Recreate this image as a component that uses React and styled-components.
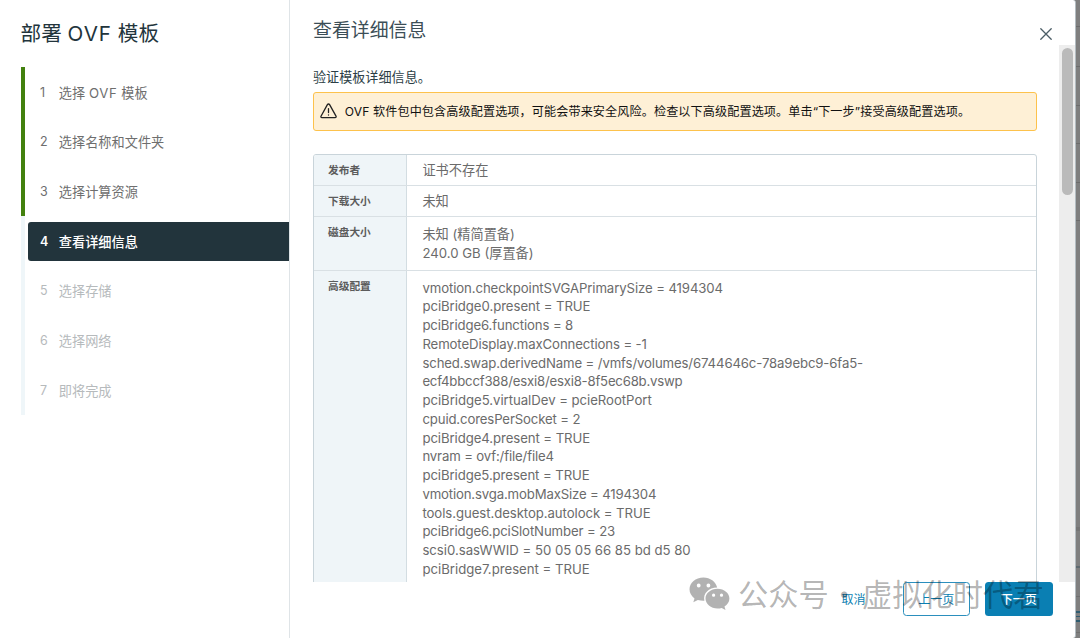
import React from 'react';
import styled, { createGlobalStyle, css } from 'styled-components';

const sans = `Inter, "Noto Sans CJK SC", sans-serif`;

const Global = createGlobalStyle`
  *, *::before, *::after { box-sizing: border-box; }
  body { margin: 0; background: #7f7f7f; font-family: ${sans}; font-size: 13.2px; overflow: hidden; }
`;

const Screen = styled.div`
  position: relative;
  width: 1080px;
  height: 638px;
  display: flex;
  background: #7f7f7f;
  overflow: hidden;
`;

const Dialog = styled.div`
  width: 1076px;
  height: 638px;
  display: flex;
  background: #fff;
  border-right: 1px solid #b3bcc1;
  border-radius: 0 3px 3px 0;
`;

const Backdrop = styled.div`
  flex: 1;
  display: flex;
  flex-direction: column;
`;

const BackdropLine = styled.div`
  height: ${(p) => p.$thick || 1}px;
  margin-top: ${(p) => p.$gap}px;
  background: ${(p) => p.$color || '#6c6c6c'};
`;

const Sidebar = styled.aside`
  width: 290px;
  border-right: 1px solid #dfe4e7;
  padding: 18.5px 0 0 20.6px;
`;

const WizardTitle = styled.h1`
  margin: 0;
  height: 48.9px;
  line-height: 30px;
  font-size: 20.6px;
  font-weight: 400;
  color: #22343c;
`;

const Latin = styled.span`
  letter-spacing: ${(p) => p.$spacing}px;
`;

const Steps = styled.ol`
  list-style: none;
  margin: 0;
  padding: 0;
`;

const Step = styled.li`
  height: 49.7px;
  display: flex;
  align-items: center;
  padding-left: 3.5px;
  border-left: 4px solid ${(p) => (p.$state === 'done' ? '#42810e' : '#eff6f9')};
`;

const StepButton = styled.div`
  flex: 1;
  height: 39px;
  display: flex;
  align-items: center;
  padding-left: 12px;
  border-radius: 3px 0 0 3px;
  color: ${(p) => (p.$state === 'todo' ? '#b6babc' : '#6e6e6e')};
  ${(p) =>
    p.$state === 'active' &&
    css`
      background: #22343c;
      color: #fff;
      font-weight: 500;
    `}
`;

const StepNumber = styled.span`
  width: 18.7px;
  font-size: 12.5px;
  font-weight: ${(p) => (p.$active ? 600 : 400)};
`;

const Main = styled.main`
  flex: 1;
  min-width: 0;
  display: flex;
  flex-direction: column;
`;

const Header = styled.header`
  height: 45px;
  display: flex;
  justify-content: space-between;
  align-items: flex-start;
  padding: 15.5px 23px 0 23px;
`;

const PageTitle = styled.h2`
  margin: 0;
  line-height: 30px;
  font-size: 18.9px;
  font-weight: 400;
  color: #3c4e57;
`;

const CloseIcon = styled.svg`
  width: 12px;
  height: 12px;
  margin-top: 12.5px;
`;

const Body = styled.div`
  height: 536.5px;
  display: flex;
  overflow: hidden;
`;

const Content = styled.div`
  width: 747px;
  padding: 23px 0 0 23px;
`;

const Intro = styled.p`
  margin: 0;
  height: 24px;
  line-height: 19px;
  font-size: 13.1px;
  color: #2c3e46;
`;

const Alert = styled.div`
  height: 39px;
  display: flex;
  align-items: center;
  padding: 0 0 1px 6.3px;
  gap: 7.5px;
  background: #fef0d6;
  border: 1px solid #fdc24c;
  border-radius: 3px;
  color: #111;
  font-size: 12.1px;
  white-space: nowrap;
`;

const AlertText = styled.span`
  padding-bottom: 2px;
  letter-spacing: 0.12px;
`;

const AlertIcon = styled.svg`
  width: 17px;
  height: 16px;
`;

const Table = styled.div`
  margin-top: 23px;
  border: 1px solid #c9d4da;
  border-radius: 3px 3px 0 0;
  overflow: hidden;
`;

const Row = styled.div`
  display: flex;
  height: ${(p) => p.$height}px;
  border-bottom: 1px solid #d9e0e4;
`;

const RowLabel = styled.div`
  width: 93px;
  padding: 7px 0 0 14px;
  line-height: 17px;
  font-size: 10.7px;
  font-weight: 600;
  color: #5c5c5c;
  background: #eff5f8;
  border-right: 1px solid #d3dde2;
`;

const RowValue = styled.div`
  padding: ${(p) => (p.$multi ? 8.2 : 6.4)}px 0 0 15.4px;
  line-height: 18.75px;
  color: #6b6b6b;
`;

const Line = styled.div`
  white-space: nowrap;
  letter-spacing: ${(p) => p.$spacing || 0}px;
`;

const Scrollbar = styled.div`
  margin-left: auto;
  width: 16px;
  padding: 3px 2.5px 0 3px;
  background: #ededed;
`;

const Thumb = styled.div`
  height: 147px;
  border-radius: 6px;
  background: #bababa;
`;

const Footer = styled.footer`
  display: flex;
  justify-content: flex-end;
  align-items: center;
  padding: 0 22.5px 0 0;
  height: 34px;
  font-size: 12px;
`;

const Button = styled.div`
  height: 34px;
  width: ${(p) => p.$width || 67.5}px;
  margin-left: 15px;
  display: flex;
  align-items: center;
  justify-content: center;
  border-radius: 3.5px;
  color: #0c7fb2;
  ${(p) => p.$kind === 'outline' && css`border: 1px solid #2b8fbd;`}
  ${(p) => p.$kind === 'primary' && css`background: #0a7fb3; color: #fff; font-weight: 500;`}
  ${(p) => p.$kind === 'link' && css`margin-right: 22px;`}
`;

const Watermark = styled.div`
  position: absolute;
  left: 688px;
  top: 572px;
  height: 44px;
  display: flex;
  align-items: center;
  color: rgba(0, 0, 0, 0.3);
  font-family: "Noto Sans CJK SC", sans-serif;
  font-size: 30.3px;
  line-height: 44px;
  white-space: nowrap;
`;

const WatermarkText = styled.span`
  display: flex;
  padding-bottom: 2px;
`;

const Dot = styled.span`
  width: 33px;
  padding-right: 4px;
  text-align: center;
`;

const WechatIcon = styled.svg`
  width: 42px;
  height: 36px;
  margin-right: 8px;
`;

const steps = [
  [<>选择 <Latin $spacing={0.7}>OVF</Latin> 模板</>, 'done'],
  ['选择名称和文件夹', 'done'],
  ['选择计算资源', 'done'],
  ['查看详细信息', 'active'],
  ['选择存储', 'todo'],
  ['选择网络', 'todo'],
  ['即将完成', 'todo'],
];

const config = [
  ['vmotion.checkpointSVGAPrimarySize = 4194304', -0.1],
  ['pciBridge0.present = TRUE', -0.06],
  ['pciBridge6.functions = 8', -0.12],
  ['RemoteDisplay.maxConnections = -1', -0.12],
  ['sched.swap.derivedName = /vmfs/volumes/6744646c-78a9ebc9-6fa5-', -0.13],
  ['ecf4bbccf388/esxi8/esxi8-8f5ec68b.vswp', -0.21],
  ['pciBridge5.virtualDev = pcieRootPort', -0.04],
  ['cpuid.coresPerSocket = 2', -0.14],
  ['pciBridge4.present = TRUE', -0.08],
  ['nvram = ovf:/file/file4', -0.15],
  ['pciBridge5.present = TRUE', -0.08],
  ['vmotion.svga.mobMaxSize = 4194304', -0.16],
  ['tools.guest.desktop.autolock = TRUE', -0.07],
  ['pciBridge6.pciSlotNumber = 23', -0.12],
  ['scsi0.sasWWID = 50 05 05 66 85 bd d5 80', -0.02],
  ['pciBridge7.present = TRUE', 0],
];

const rows = [
  { label: '发布者', height: 31, lines: [['证书不存在']] },
  { label: '下载大小', height: 31, lines: [['未知']] },
  { label: '磁盘大小', height: 53.5, lines: [['未知 (精简置备)'], ['240.0 GB (厚置备)']] },
  { label: '高级配置', height: 340, lines: config },
];

const backdropLines = [
  [26],
  [39],
  [38],
  [37],
  [38],
  [37],
  [306, '#757575', 4],
  [35, '#5f6a70', 2],
  [28, '#707070', 1],
  [14, '#2f5c70', 2],
  [3, '#2f5c70', 1],
  [3, '#2f5c70', 2],
  [10, '#707070', 1],
];

export default function App() {
  return (
    <Screen>
      <Global />
      <Dialog>
        <Sidebar>
          <WizardTitle>
            部署 <Latin $spacing={1}>OVF</Latin> 模板
          </WizardTitle>
          <Steps>
            {steps.map(([name, state], i) => (
              <Step key={i} $state={state}>
                <StepButton $state={state}>
                  <StepNumber $active={state === 'active'}>{i + 1}</StepNumber>
                  <span>{name}</span>
                </StepButton>
              </Step>
            ))}
          </Steps>
        </Sidebar>
        <Main>
          <Header>
            <PageTitle>查看详细信息</PageTitle>
            <CloseIcon viewBox="0 0 12 12" fill="none" stroke="#4b5d66" strokeWidth="1.3" strokeLinecap="round">
              <path d="M0.8 0.8 11.2 11.2M11.2 0.8 0.8 11.2" />
            </CloseIcon>
          </Header>
          <Body>
            <Content>
              <Intro>验证模板详细信息。</Intro>
              <Alert>
                <AlertIcon viewBox="0 0 17 16" fill="none" stroke="#222" strokeWidth="1.3" strokeLinejoin="round" strokeLinecap="round">
                  <path d="M7.4 1.6 1 13.2a1 1 0 0 0 .9 1.5h13.2a1 1 0 0 0 .9-1.5L9.6 1.6a1.3 1.3 0 0 0-2.2 0Z" />
                  <path d="M8.5 5.6v4M8.5 11.8v.3" />
                </AlertIcon>
                <AlertText>OVF 软件包中包含高级配置选项，可能会带来安全风险。检查以下高级配置选项。单击“下一步”接受高级配置选项。</AlertText>
              </Alert>
              <Table>
                {rows.map((row) => (
                  <Row key={row.label} $height={row.height}>
                    <RowLabel>{row.label}</RowLabel>
                    <RowValue $multi={row.lines.length > 1}>
                      {row.lines.map(([text, spacing]) => (
                        <Line key={text} $spacing={spacing}>{text}</Line>
                      ))}
                    </RowValue>
                  </Row>
                ))}
              </Table>
            </Content>
            <Scrollbar>
              <Thumb />
            </Scrollbar>
          </Body>
          <Footer>
            <Button $kind="link" $width={24}>取消</Button>
            <Button $kind="outline">上一页</Button>
            <Button $kind="primary">下一页</Button>
          </Footer>
        </Main>
      </Dialog>
      <Backdrop>
        {backdropLines.map(([gap, color, thick], i) => (
          <BackdropLine key={i} $gap={gap} $color={color} $thick={thick} />
        ))}
      </Backdrop>
      <Watermark>
        <WechatIcon viewBox="0 0 42 36" fill="#000">
          <path
            fillRule="evenodd"
            fillOpacity="0.3"
            d="M15.5 1.5C7.5 1.5 1.5 6.7 1.5 13.3c0 3.7 1.9 6.9 5 9.1L5.3 26.3l4.6-2.4c1.8.5 3.5.8 5.4.8h1.1C14.8 17.5 20.8 11.5 29.2 11.5 27.8 5.7 22.2 1.5 15.5 1.5ZM10.7 7.6a1.9 1.9 0 1 1 0 3.8 1.9 1.9 0 0 1 0-3.8ZM20.4 7.6a1.9 1.9 0 1 1 0 3.8 1.9 1.9 0 0 1 0-3.8Z"
          />
          <path
            fillRule="evenodd"
            fillOpacity="0.3"
            d="M29.5 12.8C22.8 12.8 17.5 17.2 17.5 22.6S22.8 32.6 29.5 32.6c1.5 0 2.9-.3 4.2-.7l3.8 2-1-3.3c2.9-1.9 4.9-4.7 4.9-8 0-5.4-5.2-9.8-11.9-9.8ZM25.6 17.6a1.6 1.6 0 1 1 0 3.2 1.6 1.6 0 0 1 0-3.2ZM33.5 17.6a1.6 1.6 0 1 1 0 3.2 1.6 1.6 0 0 1 0-3.2Z"
          />
        </WechatIcon>
        <WatermarkText>
          公众号<Dot>·</Dot>虚拟化时代君
        </WatermarkText>
      </Watermark>
    </Screen>
  );
}
